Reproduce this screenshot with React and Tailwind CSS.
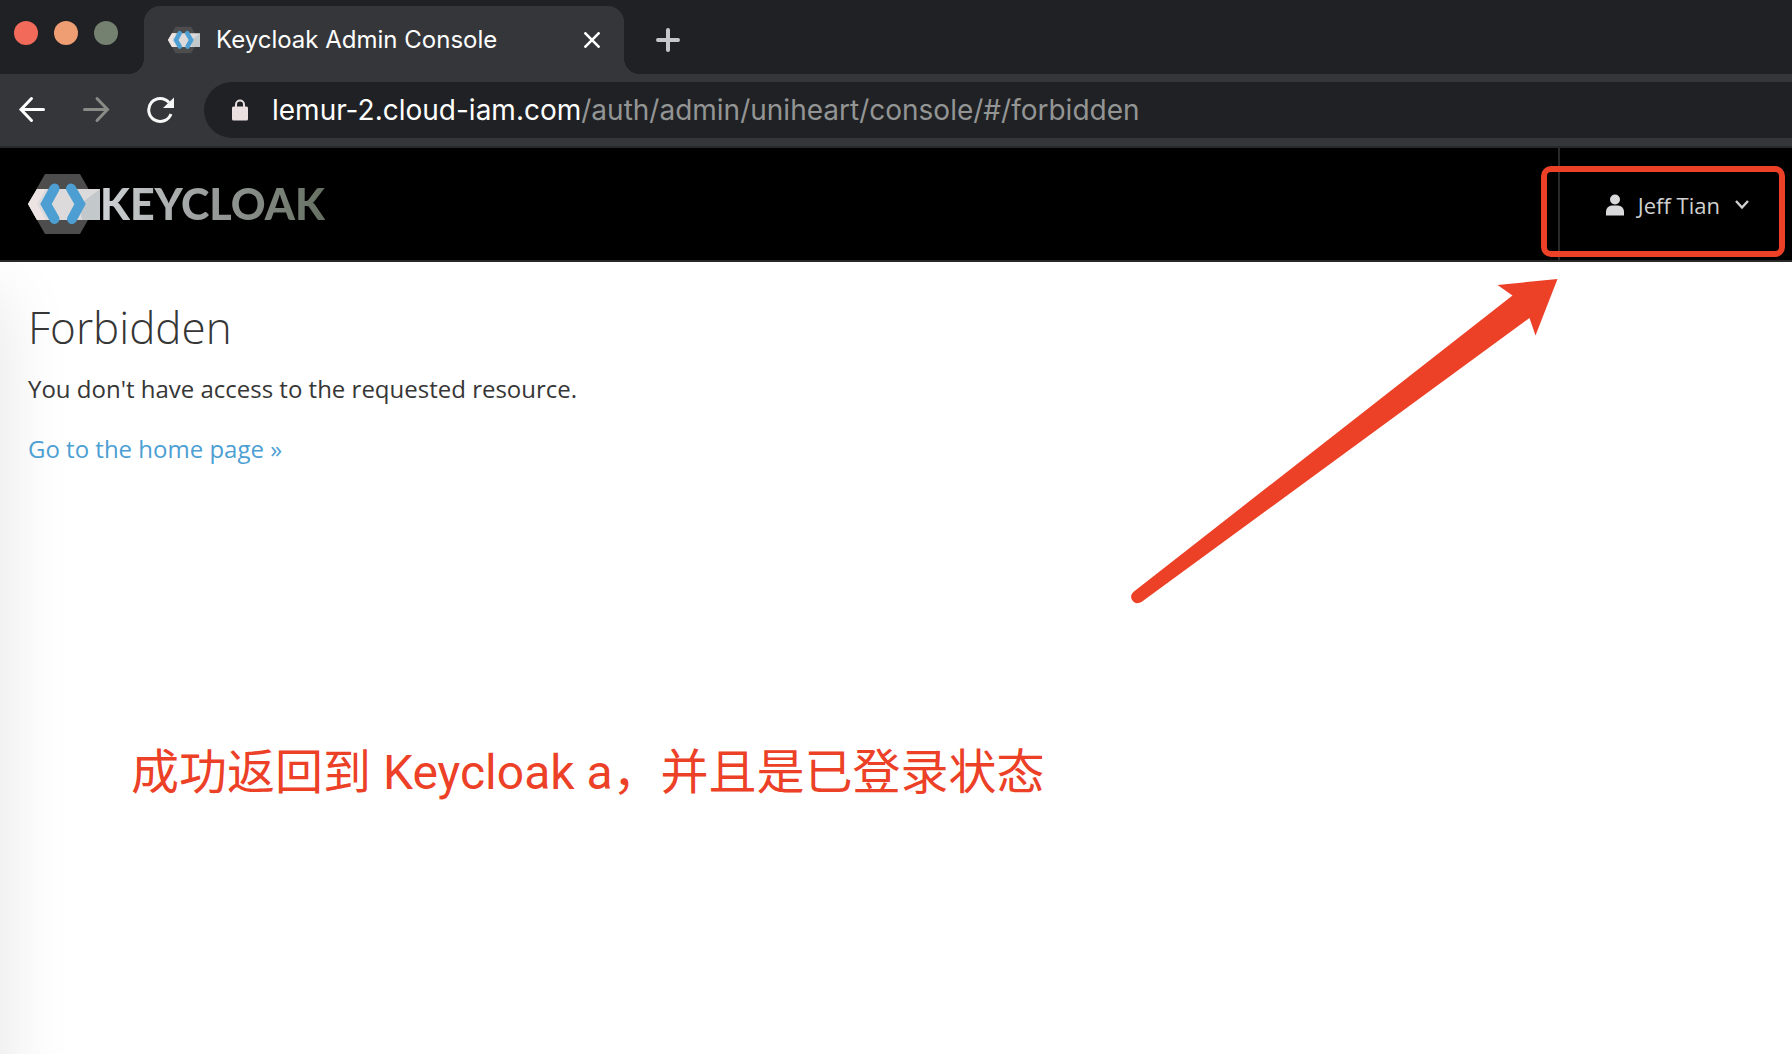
const FONT_UI = "font-['Inter','Noto_Sans_CJK_SC',sans-serif]";

function KeycloakMark({ className }) {
  return (
    <svg className={className} viewBox="0 0 72 60" aria-hidden="true">
      <path d="M17 0h35l17 30-17 30H17L0 30z" fill="#4d4d4d" />
      <path d="M9 15h63v31H9L0 30z" fill="#dcdada" />
      <path d="M0 30L9 15h9L9 30l9 16H9z" fill="#ede3e2" />
      <path d="M54 46h18V15L52 30z" fill="#c3c8cb" />
      <path d="M26.500 14.500L18 30l8.500 15" fill="none" stroke="#4d9fd3" strokeWidth="10" strokeLinejoin="miter" strokeLinecap="round" />
      <path d="M43 14.500l9 15.500L44 45" fill="none" stroke="#4d9fd3" strokeWidth="10" strokeLinejoin="miter" strokeLinecap="round" />
    </svg>
  );
}

function TabStrip() {
  return (
    <div className="flex h-[74px] items-end bg-[#202124]">
      <div className="flex h-full w-36 items-start gap-4 pl-3.5 pt-[21px]">
        <button aria-label="Close window" className="size-6 rounded-full bg-[#f16a5a]" />
        <button aria-label="Minimize window" className="size-6 rounded-full bg-[#ee9e72]" />
        <button aria-label="Zoom window" className="size-6 rounded-full bg-[#748070]" />
      </div>
      <div className="relative flex h-[68px] w-[480px] items-center rounded-t-2xl bg-[#35363a] px-6">
        <span className="absolute -left-4 bottom-0 size-4 bg-[radial-gradient(circle_at_0_0,transparent_16px,#35363a_16px)]" />
        <span className="absolute -right-4 bottom-0 size-4 bg-[radial-gradient(circle_at_100%_0,transparent_16px,#35363a_16px)]" />
        <KeycloakMark className="h-7 w-8 shrink-0" />
        <span className="ml-4 flex-1 whitespace-nowrap text-2xl leading-8 text-white">Keycloak Admin Console</span>
        <button aria-label="Close tab">
          <svg className="size-4" viewBox="0 0 16 16" fill="none" stroke="#fff" strokeWidth="2.6">
            <path d="M0.5 0.5l15 15M15.5 0.5l-15 15" />
          </svg>
        </button>
      </div>
      <button aria-label="New tab" className="ml-8 flex h-[68px] items-center">
        <svg className="size-6" viewBox="0 0 24 24" fill="none" stroke="#c4c8cb" strokeWidth="4" strokeLinecap="round">
          <path d="M12 2v20M2 12h20" />
        </svg>
      </button>
    </div>
  );
}

function Toolbar() {
  return (
    <div className="flex h-[74px] items-center border-b-2 border-[#28292c] bg-[#35363a] pl-[18px]">
      <button aria-label="Back">
        <svg className="size-7" viewBox="0 0 28 28" fill="none" stroke="#fff" strokeWidth="3" strokeLinecap="round">
          <path d="M25.500 13.500H3M13.500 2.500L3 13.500l10.500 11" />
        </svg>
      </button>
      <button aria-label="Forward" className="ml-9">
        <svg className="size-7" viewBox="0 0 28 28" fill="none" stroke="#888b86" strokeWidth="3" strokeLinecap="round">
          <path d="M2.500 13.500H25M15 2.500L25.500 13.500l-10.500 11" />
        </svg>
      </button>
      <button aria-label="Reload" className="ml-9">
        <svg className="size-7" viewBox="0 0 28 28">
          <path d="M25 18A11.500 11.500 0 1 1 23 6.500" fill="none" stroke="#f7f7f7" strokeWidth="3" />
          <path d="M28 1.500V12H17z" fill="#f7f7f7" />
        </svg>
      </button>
      <div className="ml-[30px] flex h-14 flex-1 items-center rounded-l-full bg-[#202124] pl-7">
        <svg className="h-6 w-4" viewBox="0 0 16 22">
          <path d="M4 9V5.500a4 4 0 0 1 8 0V9" fill="none" stroke="#e9e0df" strokeWidth="2" />
          <rect y="7.500" width="16" height="14" rx="1.500" fill="#e9e0df" />
        </svg>
        <a href="#/forbidden" className="ml-6 whitespace-nowrap text-[28px] leading-9 text-[#939594]">
          <span className="text-white">lemur-2.cloud-iam.com</span>/auth/admin/uniheart/console/#/forbidden
        </a>
      </div>
    </div>
  );
}

function Header() {
  return (
    <header className="flex h-[114px] items-stretch justify-between border-b-2 border-[#292929] bg-black">
      <a href="#/" className="flex items-center pl-7">
        <KeycloakMark className="h-[60px] w-[72px]" />
        <span className="bg-linear-to-r from-[#cfd3d5] via-[#979b9a] to-[#667062] bg-clip-text font-['Lato',sans-serif] text-[43px] leading-[58px] font-black text-transparent">
          KEYCLOAK
        </span>
      </a>
      <nav className="relative border-l-2 border-[#292929]">
        <button className="flex h-full items-center pl-[46px] pr-[43px] pt-0.5 font-['Open_Sans',sans-serif] text-[22px] leading-8 text-[#d1d1d1]">
          <svg className="h-[22px] w-[18px]" viewBox="0 0 18 22" fill="#d9d9db">
            <circle cx="9" cy="5.500" r="5" />
            <path d="M0 21.500v-4a6 6 0 0 1 6-6h6a6 6 0 0 1 6 6v4z" />
          </svg>
          <span className="ml-[14px] whitespace-nowrap">Jeff Tian</span>
          <svg className="ml-[15px] h-3 w-[14px]" viewBox="0 0 14 12" fill="none" stroke="#d1d1d1" strokeWidth="2.400">
            <path d="M1 2l6 6.500 6-6.500" />
          </svg>
        </button>
        <div className="pointer-events-none absolute -left-[19px] right-[7px] top-[18px] h-[91px] rounded-[10px] border-6 border-[#ec4027]" />
      </nav>
    </header>
  );
}

export default function App() {
  return (
    <div className={`flex min-h-screen flex-col bg-white ${FONT_UI}`}>
      <TabStrip />
      <Toolbar />
      <Header />
      <main className="relative flex-1 overflow-hidden">
        <div className="absolute bottom-[-100px] right-full top-8 w-40 shadow-[0_0_76px_rgba(0,0,0,0.11)]" />
        <div className="relative px-7 pt-9 font-['Open_Sans',sans-serif] text-2xl leading-10 text-[#363636]">
          <h1 className="text-[44px] leading-[58px] font-light">Forbidden</h1>
          <p className="mt-[13px]">You don't have access to the requested resource.</p>
          <p className="mt-5">
            <a href="#/" className="text-[#4d9fd3]">Go to the home page »</a>
          </p>
        </div>
        <svg className="absolute right-[234px] top-[17px] h-[325px] w-[427px]" viewBox="0 0 427 325" fill="#ec4027" aria-hidden="true">
          <path d="M426.500 0L404.500 56.500 398.500 39 12.500 321.500C8 325 4 325 1.500 321.500C-1 318 0 315 3 312.500L381.500 16.500 366.500 6z" />
        </svg>
        <p className="relative mt-[272px] pl-[131px] font-['Roboto','Noto_Sans_CJK_SC',sans-serif] text-[48px] leading-[64px] whitespace-nowrap text-[#ec4027]">
          成功返回到 Keycloak a，并且是已登录状态
        </p>
      </main>
    </div>
  );
}
